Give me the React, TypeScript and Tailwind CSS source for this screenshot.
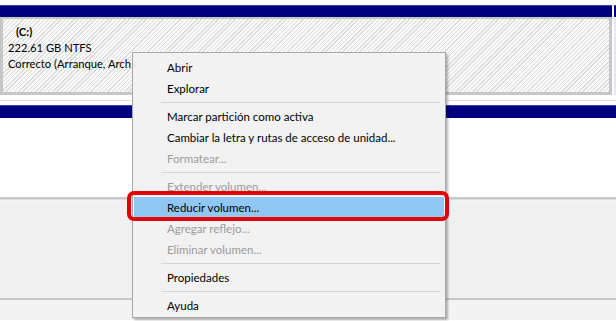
import React from "react";

type Item = { label: string; disabled?: boolean; active?: boolean } | "sep";

const items: Item[] = [
  { label: "Abrir" },
  { label: "Explorar" },
  "sep",
  { label: "Marcar partición como activa" },
  { label: "Cambiar la letra y rutas de acceso de unidad..." },
  { label: "Formatear...", disabled: true },
  "sep",
  { label: "Extender volumen...", disabled: true },
  { label: "Reducir volumen...", active: true },
  { label: "Agregar reflejo...", disabled: true },
  { label: "Eliminar volumen...", disabled: true },
  "sep",
  { label: "Propiedades" },
  "sep",
  { label: "Ayuda" },
];

export default function App() {
  return (
    <div className="relative w-[616px] h-[321px] overflow-hidden bg-white font-['Lato','Noto_Sans',sans-serif] text-[11.5px] text-black">
      {/* top disk row */}
      <div className="pt-[5px] flex gap-[2px]">
        <div className="w-[612px] flex flex-col">
          <div className="h-[12px] bg-[#00007f] border-t border-[#3a3ab8]" />
          <div className="h-[78px] border-[3px] border-t-[2px] border-[#c6c6c6] bg-[repeating-linear-gradient(135deg,#f9f9f9_0px,#f9f9f9_2px,#dcdcdc_2px,#dcdcdc_3px)]">
            <div className="pl-[5px] pt-[5px] leading-[16px] text-[11.2px]">
              <div className="pl-[8px] font-bold">(C:)</div>
              <div>222.61 GB NTFS</div>
              <div className="w-[123px] overflow-hidden whitespace-nowrap">
                Correcto (Arranque, Archivo de paginación, Volcado, Partición primaria)
              </div>
            </div>
          </div>
        </div>
        <div className="flex-1 flex flex-col">
          <div className="h-[12px] bg-[#00007f] border-t border-[#3a3ab8]" />
          <div className="h-[78px] bg-[#e8e8f4]" />
        </div>
      </div>
      {/* gap with faint line */}
      <div className="h-[10px] flex flex-col justify-center">
        <div className="h-px bg-[#e2e2e2]" />
      </div>
      {/* second navy band */}
      <div className="h-[13px] bg-[#00007f] border-t border-[#3a3ab8]" />
      {/* white area */}
      <div className="h-[79px] bg-white" />
      {/* lower panel */}
      <div className="border-t-[2px] border-[#c8c8c8]">
        <div className="h-[2px] bg-[#f4f4f4] border-t border-[#dcdcdc]" />
        <div className="h-[97px] bg-[#f0f0f0]" />
        <div className="h-[2px] bg-[#c8c8c8]" />
        <div className="h-[20px] bg-[#f3f3f3]" />
      </div>

      {/* context menu */}
      <div className="absolute left-[132px] top-[52px] w-[314px] h-[266px] bg-[#f2f2f2] border border-[#a8a8a8] shadow-[2px_2px_2px_rgba(0,0,0,0.28)] pt-[4px] pb-[2px] px-[1px]">
        {items.map((it, i) =>
          it === "sep" ? (
            <div key={i} className="h-[7px] flex items-center pl-[27px] pr-[4px]">
              <div className="h-px w-full bg-[#d6d6d6]" />
            </div>
          ) : (
            <div
              key={i}
              className={
                "h-[21px] flex items-center pl-[33px] " +
                (it.active ? "bg-[#91c7f5] text-black" : it.disabled ? "text-[#9b9b9b]" : "text-black")
              }
            >
              {it.label}
            </div>
          )
        )}
      </div>

      {/* red highlight box */}
      <div className="absolute left-[127px] top-[191px] w-[322px] h-[30px] border-[4px] border-[#e30000] rounded-[7px]" />
    </div>
  );
}
